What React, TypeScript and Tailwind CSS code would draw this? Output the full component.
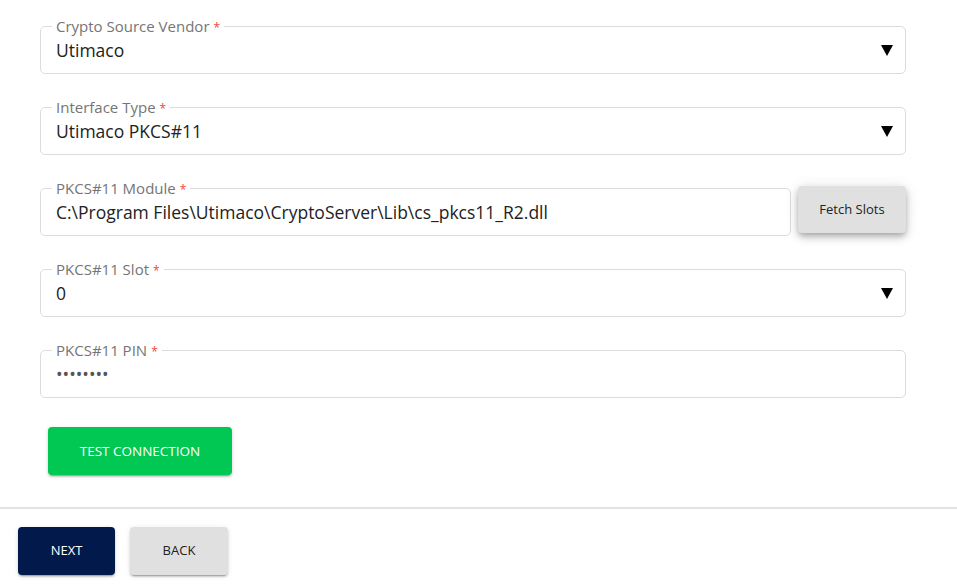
import React from "react";

interface FieldProps {
    label: string;
    value: string;
    select?: boolean;
    className?: string;
    valueClass?: string;
}

const Arrow = () => (
    <svg className="w-[12px] h-[11px] shrink-0" viewBox="0 0 12 11" xmlns="http://www.w3.org/2000/svg">
        <polygon points="0,0 12,0 6,11" fill="#000" />
    </svg>
)

const Field = ({ label, value, select, className, valueClass }: FieldProps) => {
    return (
        <fieldset className={"border border-[#dcdcdc] rounded-[5px] pl-[11px] pr-[12px] pb-[9px] min-w-0 " + (className ?? "")}>
            <legend className="px-[4px] h-[16px] text-[15px] leading-[16px] text-[#757575]">
                {label}
                <span className="text-[#f44336] text-[12px] leading-none ml-[4px]">*</span>
            </legend>
            <div className="flex items-center justify-between pl-[4px] h-[28px] mt-[2px]">
                <span className={"text-[17.5px] whitespace-nowrap " + (valueClass ?? "text-[#222]")}>{value}</span>
                {select && <Arrow />}
            </div>
        </fieldset>
    )
}

const App = () => {
    return (
        <div className="w-[957px] h-[584px] bg-white overflow-hidden font-['Open_Sans',sans-serif]">
            <div className="pt-[18px] pl-[40px] pr-[51px] flex flex-col gap-[25px]">
                <Field label="Crypto Source Vendor" value="Utimaco" select />
                <Field label="Interface Type" value="Utimaco PKCS#11" select />
                <div className="flex items-end gap-[7px]">
                    <Field className="flex-1" label="PKCS#11 Module" value="C:\Program Files\Utimaco\CryptoServer\Lib\cs_pkcs11_R2.dll" />
                    <button type="button"
                        className="w-[108px] h-[47px] mb-[3px] rounded-[4px] bg-[#e0e0e0] text-[13px] text-[#222] shadow-[0_3px_5px_-1px_rgba(0,0,0,0.2),0_5px_8px_0_rgba(0,0,0,0.14),0_1px_14px_0_rgba(0,0,0,0.12)]">
                        Fetch Slots
                    </button>
                </div>
                <Field label="PKCS#11 Slot" value="0" select />
                <Field label="PKCS#11 PIN" value="••••••••" valueClass="text-[#555]" />
            </div>

            <div className="pl-[48px] mt-[29px]">
                <button type="button"
                    className="w-[184px] h-[48px] rounded-[4px] bg-[#00c853] text-white text-[13.5px] font-medium uppercase shadow-[0_3px_1px_-2px_rgba(0,0,0,0.2),0_2px_2px_0_rgba(0,0,0,0.14),0_1px_5px_0_rgba(0,0,0,0.12)]">
                    Test Connection
                </button>
            </div>

            <div className="mt-[32px] h-[2px] bg-[#dfe3e8]"></div>

            <div className="flex gap-[15px] pl-[18px] pt-[18px]">
                <button type="button"
                    className="w-[97px] h-[48px] rounded-[4px] bg-[#011a4b] text-white text-[13px] font-medium uppercase shadow-[0_3px_1px_-2px_rgba(0,0,0,0.2),0_2px_2px_0_rgba(0,0,0,0.14),0_1px_5px_0_rgba(0,0,0,0.12)]">
                    Next
                </button>
                <button type="button"
                    className="w-[98px] h-[48px] rounded-[4px] bg-[#e0e0e0] text-[#222] text-[13px] uppercase shadow-[0_3px_1px_-2px_rgba(0,0,0,0.2),0_2px_2px_0_rgba(0,0,0,0.14),0_1px_5px_0_rgba(0,0,0,0.12)]">
                    Back
                </button>
            </div>
        </div>
    )
}
export default App
